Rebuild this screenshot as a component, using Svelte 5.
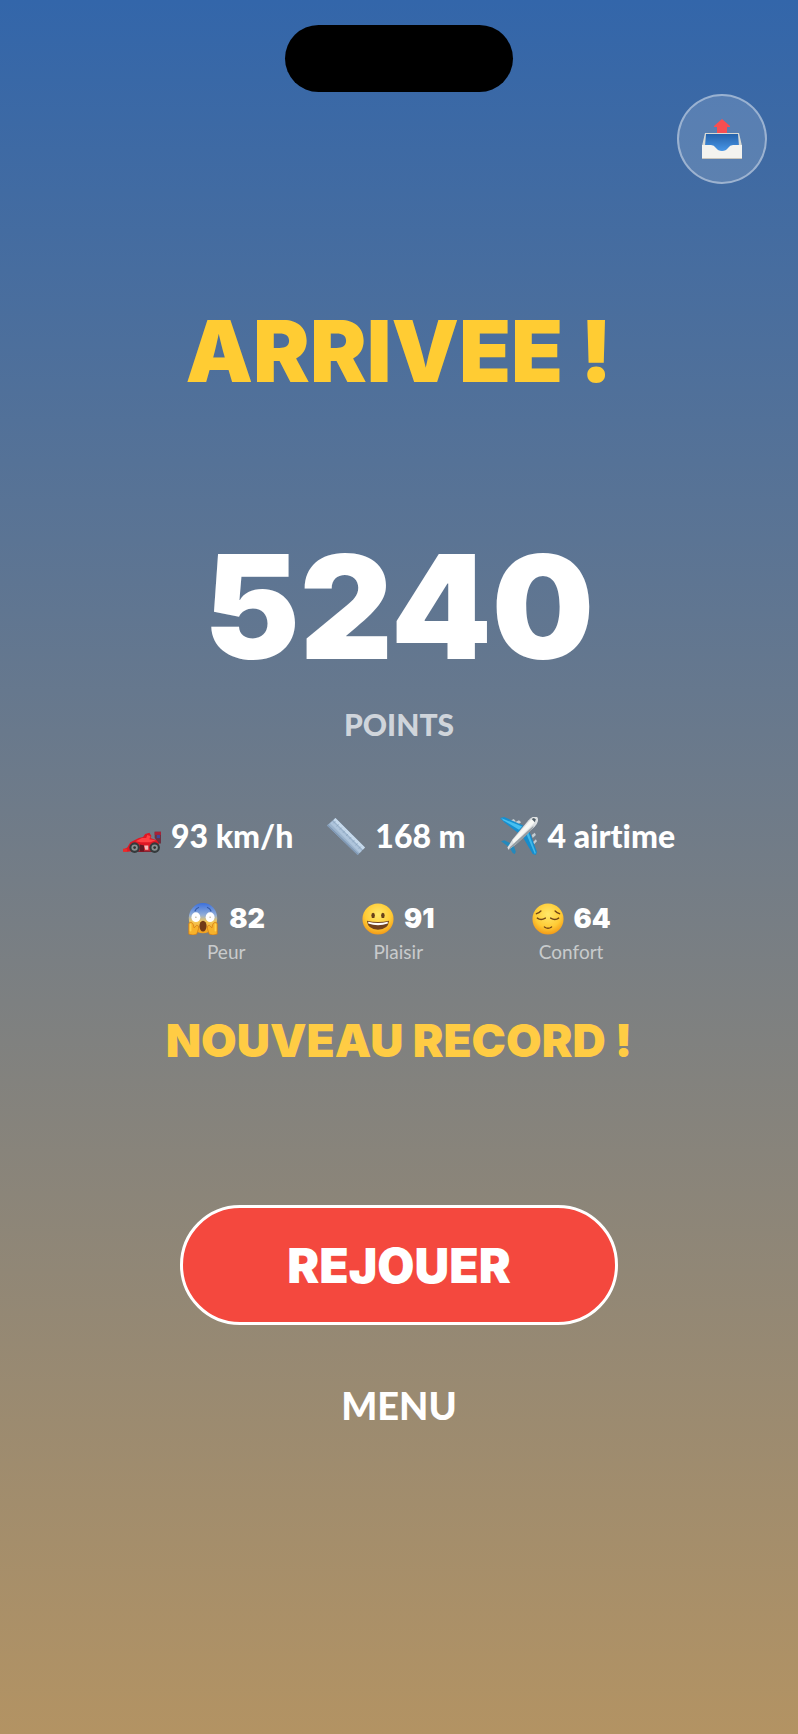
<script>
  let score = $state(5240);
  let isRecord = $state(true);

  const stats = [
    { icon: "car", text: "93 km/h" },
    { icon: "ruler", text: "168 m" },
    { icon: "plane", text: "4 airtime" },
  ];

  const feelings = [
    { icon: "scream", value: 82, label: "Peur" },
    { icon: "grin", value: 91, label: "Plaisir" },
    { icon: "relieved", value: 64, label: "Confort" },
  ];
</script>

<svelte:head><title>Arrivee !</title></svelte:head>

{#snippet icon(name)}
  <svg class="icon" viewBox="0 0 36 36" aria-hidden="true">
    {#if name === "car"}
      <g transform="translate(0 5)">
        <path d="M30 9h6v11h-4l-1-4-1-1z" fill="#6d3040" />
        <path d="M30 9h6v3h-6z" fill="#a92137" />
        <path d="M32 12h3v3h-3z" fill="#3f499a" />
        <path d="M0 26l4-2 3-5 8-4 4-1 2-3 4-1 2 3-1 2 6 2 2 3v6l-6 1H13l-9 1-4-1z" fill="#df1824" />
        <path d="M12 18l6-3h4l1-3 3 1-1 3 6 1-5 2h-9z" fill="#ff4143" />
        <path d="M16 21l4 1v6h-4z" fill="#611923" />
        <path d="M0 25h4v3H0z" fill="#ee2928" />
        <path d="M14 27h16v1H14z" fill="#871322" />
        <circle cx="11" cy="24" r="5" fill="#343a3c" />
        <circle cx="30" cy="24" r="5" fill="#343a3c" />
        <circle cx="11" cy="24" r="3" fill="#889090" />
        <circle cx="30" cy="24" r="3" fill="#889090" />
        <circle cx="11" cy="24" r="1.3" fill="#333" />
        <circle cx="30" cy="24" r="1.3" fill="#333" />
        <path d="M20 22h4v4h-3z" fill="#f6b9b9" />
      </g>
    {:else if name === "ruler"}
      <path d="M8 1l28 28-7 7L0 8z" fill="#9bb3cc" />
      <path d="M8 1l28 28-2 2L6 3z" fill="#c6d9eb" />
      <path d="M5 4l28 28-2 2L3 6z" fill="#afc5dc" />
      <path d="M0 8l29 28 1-1L1 7z" fill="#8099b5" />
      <path
        d="M8 4l-2 2M11 7L9 9M14 10l-2 2M17 13l-2 2M20 16l-2 2M23 19l-2 2M26 22l-2 2M29 25l-2 2M32 28l-2 2"
        stroke="#8ca5be"
        stroke-width=".7"
      />
    {:else if name === "plane"}
      <path d="M9 4l4-2 2 2-3 2zM14 5l4-2 2 2-3 2zM30 17l3-2 1 2-3 3zM31 24l3-3 1 2-3 3z" fill="#c3ccd1" />
      <path d="M0 1l4-1 18 8-5 7L4 5z" fill="#168fd0" />
      <path d="M1 1l20 8-3 3L3 3z" fill="#46bff0" />
      <path d="M21 18l7-4 7 19-1 3-3-1z" fill="#168ccc" />
      <path d="M25 16l2-1 7 19-1 1z" fill="#41b8e9" />
      <path d="M1 23l3-1 8 4-3 3zM8 27l4-3 3 9-1 2-2-1z" fill="#2489bc" />
      <path d="M7 29l5-8L27 3q5-5 8-3 3 3-2 9L15 26l-7 5z" fill="#dde0e2" />
      <path d="M12 22L28 4q4-4 6-3 0 4-5 8L13 25z" fill="#f8f8f5" />
      <path d="M10 28l22-20q-2 6-17 18l-7 5z" fill="#969da3" />
      <path d="M30 2l3 3 1-3-2-1z" fill="#53616b" />
    {:else if name === "scream"}
      <defs>
        <linearGradient id="fear" x2="0" y2="1">
          <stop stop-color="#3b70dd" />
          <stop offset=".4" stop-color="#91add7" />
          <stop offset=".62" stop-color="#f5c754" />
          <stop offset="1" stop-color="#f2a01c" />
        </linearGradient>
      </defs>
      <ellipse cx="18" cy="17" rx="16" ry="17" fill="url(#fear)" />
      <path d="M9 9q1-3 4-4M23 5q3 1 4 4" fill="none" stroke="#355aa5" stroke-width="1.3" stroke-linecap="round" />
      <ellipse cx="10" cy="16" rx="5" ry="5.500" fill="#fff" />
      <ellipse cx="26" cy="16" rx="5" ry="5.500" fill="#fff" />
      <circle cx="10" cy="16" r=".8" fill="#b5a58c" />
      <circle cx="26" cy="16" r=".8" fill="#b5a58c" />
      <ellipse cx="18" cy="26" rx="4" ry="6" fill="#713a18" />
      <path d="M2 23q3-3 5 1l1 4 3-3q3 0 2 4l-2 6q-4 2-9 0zM34 23q-3-3-5 1l-1 4-3-3q-3 0-2 4l2 6q4 2 9 0z" fill="#f7b22a" stroke="#d47c15" stroke-width=".8" />
      <path d="M4 24v7M32 24v7" stroke="#ffd34d" stroke-width="2" stroke-linecap="round" />
    {:else}
      <defs>
        <radialGradient id="skin-{name}" cx=".5" cy=".35" r=".65">
          <stop stop-color="#ffe86a" />
          <stop offset=".65" stop-color="#ffcb35" />
          <stop offset="1" stop-color="#f39a17" />
        </radialGradient>
      </defs>
      <circle cx="18" cy="18" r="17.500" fill="url(#skin-{name})" />
      {#if name === "grin"}
        <ellipse cx="12.500" cy="14" rx="2" ry="3" fill="#68401b" />
        <ellipse cx="23.500" cy="14" rx="2" ry="3" fill="#68401b" />
        <path d="M5.500 20q12.500 3 25 0-1 10-12.500 10T5.500 20z" fill="#71411d" />
        <path d="M7 21q11 3 22 0v2q-11 4-22 0z" fill="#fff" />
      {:else}
        <path
          d="M5 12q3-1 5-3M31 12q-3-1-5-3M6 17q4 3 9 0M21 17q5 3 9 0M14 27q4 3 8 0"
          fill="none"
          stroke="#724618"
          stroke-width="1.6"
          stroke-linecap="round"
        />
      {/if}
    {/if}
  </svg>
{/snippet}

<main class="screen">
  <div class="island"></div>

  <header>
    <button class="share" aria-label="Partager">
      <svg viewBox="0 0 40 40" aria-hidden="true">
        <defs>
          <linearGradient id="tray" x2="0" y2="1">
            <stop stop-color="#2562ab" />
            <stop offset="1" stop-color="#4c9ced" />
          </linearGradient>
        </defs>
        <path d="M3 14h34l3 13H0z" fill="#d8d9d4" />
        <path d="M4 15h32l1 12q-5 0-8 4-3 3-9 3t-9-3q-3-4-8-4z" fill="url(#tray)" />
        <path d="M20 0l8 7v1h-3v6H15V8h-3V7z" fill="#f94e51" />
        <path d="M0 26h9q3 0 5 3 2 3 6 3t6-3q2-3 5-3h9v14H0z" fill="#f4f3ef" />
        <path d="M0 39h40v1H0z" fill="#c9c5bc" />
      </svg>
    </button>
  </header>

  <h1>ARRIVEE !</h1>

  <section class="score">
    <div class="score-value">{score}</div>
    <div class="score-unit">POINTS</div>
  </section>

  <ul class="stats">
    {#each stats as stat}
      <li>{@render icon(stat.icon)}<span>{stat.text}</span></li>
    {/each}
  </ul>

  <ul class="feelings">
    {#each feelings as f}
      <li>
        <div class="feeling-value">{@render icon(f.icon)}<span>{f.value}</span></div>
        <div class="feeling-label">{f.label}</div>
      </li>
    {/each}
  </ul>

  {#if isRecord}
    <p class="record">NOUVEAU RECORD !</p>
  {/if}

  <div class="actions">
    <button class="replay">REJOUER</button>
    <button class="menu">MENU</button>
  </div>
</main>

<style>
  :global(body) { margin: 0; }

  .screen {
    box-sizing: border-box;
    min-height: 100vh;
    padding: 25px 0 48px;
    display: flex;
    flex-direction: column;
    align-items: center;
    background: linear-gradient(#3366aa, #b39363);
    color: #fff;
    font-family: Lato, "Open Sans", sans-serif;
    font-weight: 900;
    font-variant-ligatures: none;
    text-align: center;
  }

  h1, p, ul { margin: 0; padding: 0; list-style: none; }
  button { margin: 0; padding: 0; border: 0; background: none; color: inherit; font: inherit; cursor: pointer; }

  h1, .score-value, .feeling-value, .record, .replay { font-family: Inter, "Open Sans", sans-serif; font-weight: 900; }

  .island { width: 228px; height: 67px; border-radius: 34px; background: #000; }

  header { align-self: stretch; display: flex; justify-content: flex-end; padding: 2px 31px 0; }
  .share {
    box-sizing: border-box;
    width: 90px;
    height: 90px;
    display: grid;
    place-items: center;
    border: 2px solid rgba(255, 255, 255, .4);
    border-radius: 50%;
    background: rgba(255, 255, 255, .15);
  }
  .share svg { width: 40px; height: 40px; }

  h1 { margin-top: 128px; font-size: 85px; line-height: 80px; color: #ffcc33; }

  .score { margin-top: 145px; }
  .score-value { font-size: 144px; line-height: 140px; }
  .score-unit { margin-top: 31px; font-size: 30px; line-height: 32px; color: rgba(255, 255, 255, .7); }

  .stats { margin-top: 76px; display: flex; gap: 34px; font-size: 32px; line-height: 40px; }
  .stats li { display: flex; align-items: center; gap: 10px; }
  .icon { flex: none; width: 38px; height: 38px; }

  .feelings { margin-top: 46px; display: flex; gap: 97px; }
  .feeling-value { display: flex; align-items: center; gap: 10px; font-size: 27px; line-height: 34px; }
  .feeling-value .icon { width: 32px; height: 32px; }
  .feeling-label { margin-top: 4px; font-size: 19px; line-height: 24px; font-weight: 400; color: rgba(255, 255, 255, .6); }

  .record { margin-top: 52px; font-size: 46px; line-height: 48px; color: #ffcc44; }

  .actions { margin-top: 141px; display: flex; flex-direction: column; align-items: center; gap: 56px; }
  .replay {
    box-sizing: border-box;
    width: 438px;
    height: 120px;
    border: 3px solid #fff;
    border-radius: 60px;
    background: #f4483e;
    font-size: 48px;
  }
  .menu { font-size: 38px; line-height: 48px; }
</style>
